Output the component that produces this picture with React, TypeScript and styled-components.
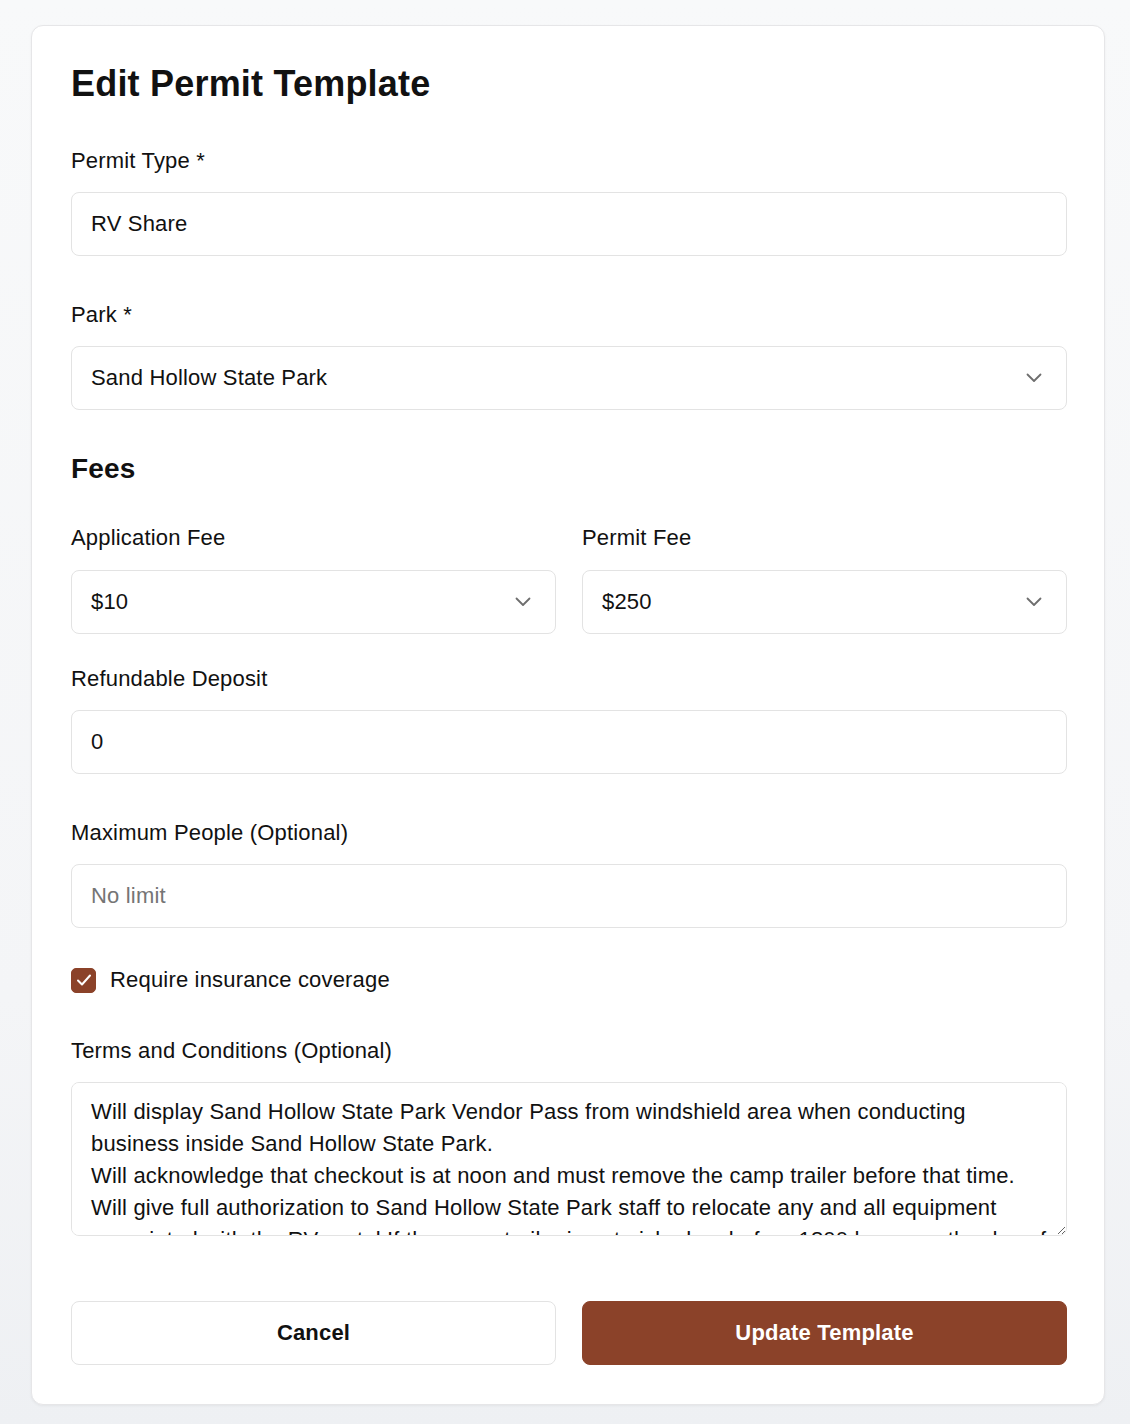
import React, { FC, ReactElement } from 'react';
import styled, { createGlobalStyle } from 'styled-components';

const Style = {
  color: {
    text: '#111111',
    muted: '#757575',
    border: '#e3e3e3',
    primary: '#8b4229',
    chevron: '#6e6e6e',
  },
  font: '"Liberation Sans", Arial, Helvetica, sans-serif',
  spacing: '0.18px',
};

const GlobalStyle = createGlobalStyle`
  html, body {
    margin: 0;
    padding: 0;
  }
  body {
    background: linear-gradient(180deg, #f8f9fa 0%, #f4f5f7 70%, #eef0f3 100%);
    font-family: ${Style.font};
    color: ${Style.color.text};
    letter-spacing: ${Style.spacing};
    -webkit-font-smoothing: antialiased;
  }
  * {
    box-sizing: border-box;
  }
`;

const Page = styled.div`
  min-height: 1424px;
  padding: 25px 25px 20px 31px;
`;

const Card = styled.form`
  display: flex;
  flex-direction: column;
  background: #ffffff;
  border: 1px solid #e6e6e8;
  border-radius: 12px;
  box-shadow: 0 1px 3px rgba(0, 0, 0, 0.05);
  padding: 36px 37px 39px 39px;
`;

const Title = styled.h1`
  margin: 0;
  font-size: 36px;
  line-height: 44px;
  font-weight: 700;
  letter-spacing: 0.2px;
  color: ${Style.color.text};
`;

const SectionTitle = styled.h2`
  margin: 42px 0 0;
  font-size: 28px;
  line-height: 34px;
  font-weight: 700;
`;

const Field = styled.div<{ $top: number }>`
  display: flex;
  flex-direction: column;
  margin-top: ${(p) => p.$top}px;
  min-width: 0;
`;

const Label = styled.label<{ $gap?: number }>`
  font-size: 22px;
  line-height: 32px;
  margin-bottom: ${(p) => p.$gap ?? 15}px;
  color: ${Style.color.text};
`;

const TextInput = styled.input`
  width: 100%;
  height: 64px;
  padding: 0 19px;
  border: 1px solid ${Style.color.border};
  border-radius: 8px;
  background: #fff;
  font-family: ${Style.font};
  font-size: 22px;
  letter-spacing: ${Style.spacing};
  color: ${Style.color.text};
  outline: none;

  &::placeholder {
    color: ${Style.color.muted};
  }
`;

const SelectBox = styled.div`
  display: flex;
  align-items: center;
  justify-content: space-between;
  height: 64px;
  padding: 0 24px 0 19px;
  border: 1px solid ${Style.color.border};
  border-radius: 8px;
  background: #fff;
  font-size: 22px;
  color: ${Style.color.text};
  cursor: pointer;
`;

const FeeGrid = styled.div`
  display: grid;
  grid-template-columns: 1fr 1fr;
  column-gap: 26px;
  margin-top: 36px;
`;

const CheckRow = styled.label`
  display: flex;
  align-items: center;
  gap: 14px;
  height: 32px;
  margin-top: 36px;
  font-size: 22px;
  cursor: pointer;
`;

const CheckBox = styled.span<{ $checked: boolean }>`
  display: flex;
  align-items: center;
  justify-content: center;
  width: 25px;
  height: 25px;
  border-radius: 5px;
  background: ${(p) => (p.$checked ? Style.color.primary : '#fff')};
  border: 1px solid ${(p) => (p.$checked ? Style.color.primary : Style.color.border)};
`;

const TextArea = styled.textarea`
  width: 100%;
  height: 154px;
  padding: 13px 19px;
  border: 1px solid ${Style.color.border};
  border-radius: 8px;
  font-family: ${Style.font};
  font-size: 22px;
  line-height: 32px;
  letter-spacing: ${Style.spacing};
  color: ${Style.color.text};
  outline: none;
  resize: vertical;
  scrollbar-width: none;

  &::-webkit-scrollbar {
    width: 0;
    height: 0;
  }
`;

const Actions = styled.div`
  display: grid;
  grid-template-columns: 1fr 1fr;
  column-gap: 26px;
  margin-top: 65px;
`;

const Button = styled.button<{ $primary?: boolean }>`
  height: 64px;
  border-radius: 8px;
  border: 1px solid ${(p) => (p.$primary ? Style.color.primary : Style.color.border)};
  background: ${(p) => (p.$primary ? Style.color.primary : '#fff')};
  color: ${(p) => (p.$primary ? '#fff' : Style.color.text)};
  font-family: ${Style.font};
  font-size: 22px;
  font-weight: 700;
  letter-spacing: ${Style.spacing};
  cursor: pointer;
`;

const Chevron: FC = () => (
  <svg width="16" height="10" viewBox="0 0 16 10" fill="none">
    <polyline
      points="1.5,1.5 8,8 14.5,1.5"
      stroke={Style.color.chevron}
      strokeWidth="1.8"
      strokeLinecap="round"
      strokeLinejoin="round"
    />
  </svg>
);

const Select: FC<{ value: string }> = ({ value }): ReactElement => (
  <SelectBox>
    <span>{value}</span>
    <Chevron />
  </SelectBox>
);

const terms =
  'Will display Sand Hollow State Park Vendor Pass from windshield area when conducting business inside Sand Hollow State Park.\n' +
  'Will acknowledge that checkout is at noon and must remove the camp trailer before that time.\n' +
  'Will give full authorization to Sand Hollow State Park staff to relocate any and all equipment associated with the RV rental If the camp trailer is not picked up before 1800 hours on the day of checkout.';

const App: FC = (): ReactElement => {
  return (
    <>
      <GlobalStyle />
      <Page>
        <Card onSubmit={(e) => e.preventDefault()}>
          <Title>Edit Permit Template</Title>

          <Field $top={39}>
            <Label>Permit Type *</Label>
            <TextInput defaultValue="RV Share" />
          </Field>

          <Field $top={43}>
            <Label>Park *</Label>
            <Select value="Sand Hollow State Park" />
          </Field>

          <SectionTitle>Fees</SectionTitle>

          <FeeGrid>
            <Field $top={0}>
              <Label $gap={16}>Application Fee</Label>
              <Select value="$10" />
            </Field>
            <Field $top={0}>
              <Label $gap={16}>Permit Fee</Label>
              <Select value="$250" />
            </Field>
          </FeeGrid>

          <Field $top={29}>
            <Label>Refundable Deposit</Label>
            <TextInput defaultValue="0" />
          </Field>

          <Field $top={43}>
            <Label>Maximum People (Optional)</Label>
            <TextInput placeholder="No limit" />
          </Field>

          <CheckRow>
            <CheckBox $checked>
              <svg width="18" height="18" viewBox="0 0 18 18" fill="none">
                <polyline
                  points="3,9.5 7,13.5 15,4.5"
                  stroke="#fff"
                  strokeWidth="2"
                  strokeLinecap="round"
                  strokeLinejoin="round"
                />
              </svg>
            </CheckBox>
            <span>Require insurance coverage</span>
          </CheckRow>

          <Field $top={39}>
            <Label>Terms and Conditions (Optional)</Label>
            <TextArea defaultValue={terms} />
          </Field>

          <Actions>
            <Button type="button">Cancel</Button>
            <Button type="submit" $primary>
              Update Template
            </Button>
          </Actions>
        </Card>
      </Page>
    </>
  );
};

export default App;
